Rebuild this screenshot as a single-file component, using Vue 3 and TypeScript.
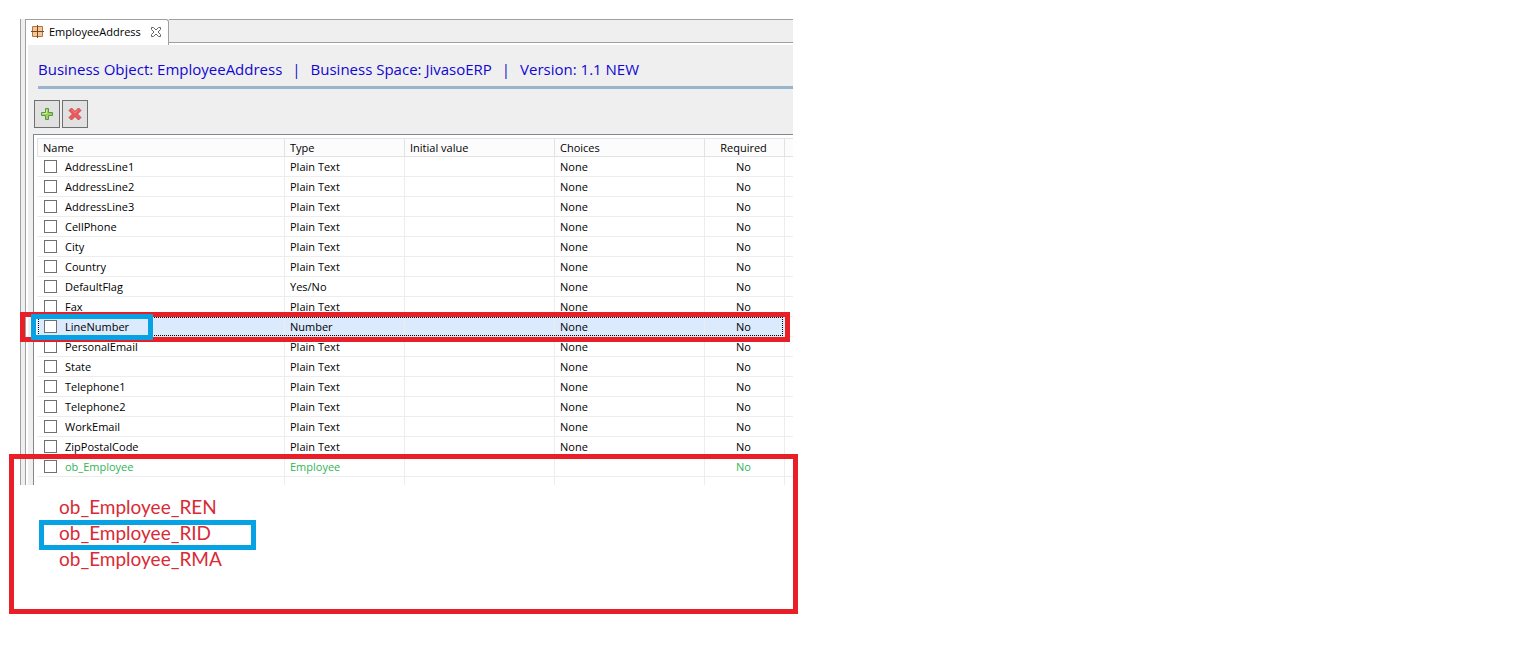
<script setup lang="ts">
interface Field {
  name: string
  type: string
  choices: string
  required: string
  state?: 'selected' | 'reference'
}

const plain = (name: string): Field => ({ name, type: 'Plain Text', choices: 'None', required: 'No' })

const summary: string[] = [
  'Business Object: EmployeeAddress',
  'Business Space: JivasoERP',
  'Version: 1.1 NEW',
]

const fields: Field[] = [
  plain('AddressLine1'),
  plain('AddressLine2'),
  plain('AddressLine3'),
  plain('CellPhone'),
  plain('City'),
  plain('Country'),
  { ...plain('DefaultFlag'), type: 'Yes/No' },
  plain('Fax'),
  { ...plain('LineNumber'), type: 'Number', state: 'selected' },
  plain('PersonalEmail'),
  plain('State'),
  plain('Telephone1'),
  plain('Telephone2'),
  plain('WorkEmail'),
  plain('ZipPostalCode'),
  { name: 'ob_Employee', type: 'Employee', choices: '', required: 'No', state: 'reference' },
]

const derived = [
  { text: 'ob_Employee_REN', marked: false },
  { text: 'ob_Employee_RID', marked: true },
  { text: 'ob_Employee_RMA', marked: false },
]
</script>

<template>
  <main class="page">
    <section class="window">
      <div class="sash"></div>
      <div class="editor">
        <div class="tabs">
          <div class="tab">
            <svg class="tab-icon" width="13" height="13" viewBox="0 0 13 13" aria-hidden="true">
              <rect x="1" y="1" width="11" height="11" rx="1" fill="#b5743c" />
              <rect x="2" y="2" width="4" height="4" fill="#f0c899" />
              <rect x="7" y="2" width="4" height="4" fill="#f0c899" />
              <rect x="2" y="7" width="4" height="4" fill="#f0c899" />
              <rect x="7" y="7" width="4" height="4" fill="#f0c899" />
              <path d="M6.5 0v13M0 6.5h13" stroke="#7d4520" />
            </svg>
            <span>EmployeeAddress</span>
            <button class="close" type="button" aria-label="Close tab">
              <svg width="12" height="12" viewBox="0 0 12 12" aria-hidden="true">
                <path
                  d="M1.5 1.5h2L6 4l2.5-2.500h2v2L8 6l2.500 2.500v2h-2L6 8l-2.500 2.500h-2v-2L4 6 1.500 3.500z"
                  fill="#fff" stroke="#666" stroke-width="1"
                />
              </svg>
            </button>
          </div>
          <div class="tab-rest"></div>
        </div>
        <div class="body">
          <h1 class="summary">
            <template v-for="(part, i) in summary" :key="part">
              <span v-if="i > 0">|</span>
              <span>{{ part }}</span>
            </template>
          </h1>
          <div class="toolbar">
            <button type="button" aria-label="Add">
              <svg width="14" height="14" viewBox="0 0 14 14" aria-hidden="true">
                <path d="M5.500 1.500h3v4h4v3h-4v4h-3v-4h-4v-3h4z" fill="#a0cf5c" stroke="#5b9648" stroke-linejoin="round" />
                <path d="M6.500 2.500v4h-4" fill="none" stroke="#cfe8a0" />
              </svg>
            </button>
            <button type="button" aria-label="Delete">
              <svg width="14" height="14" viewBox="0 0 14 14" aria-hidden="true">
                <path d="M3.500 1 7 4.500 10.500 1 13 3.500 9.500 7l3.500 3.500-2.500 2.500L7 9.500 3.500 13 1 10.500 4.500 7 1 3.500z" fill="#ea5a5c" stroke="#cc4c52" stroke-linejoin="round" />
                <path d="M3.500 2.500 7 6l3.500-3.500" fill="none" stroke="#f0807e" />
              </svg>
            </button>
          </div>
          <div class="grid">
            <table>
              <colgroup>
                <col class="c-name" /><col class="c-type" /><col class="c-wide" />
                <col class="c-wide" /><col class="c-req" /><col class="c-end" />
              </colgroup>
              <thead>
                <tr>
                  <th>Name</th><th>Type</th><th>Initial value</th><th>Choices</th>
                  <th class="center">Required</th><th></th>
                </tr>
              </thead>
              <tbody>
                <tr v-for="f in fields" :key="f.name" :class="f.state">
                  <td>
                    <label class="check"><input type="checkbox" /><span>{{ f.name }}</span></label>
                    <template v-if="f.state === 'selected'">
                      <span class="focus"></span>
                      <span class="mark-row"></span>
                      <span class="mark-name"></span>
                    </template>
                  </td>
                  <td>{{ f.type }}</td>
                  <td></td>
                  <td>{{ f.choices }}</td>
                  <td class="center">{{ f.required }}</td>
                  <td></td>
                </tr>
                <tr class="cut"><td></td><td></td><td></td><td></td><td></td><td></td></tr>
              </tbody>
            </table>
          </div>
        </div>
      </div>
    </section>
    <section class="notes">
      <ul>
        <li v-for="d in derived" :key="d.text" :class="{ marked: d.marked }">{{ d.text }}</li>
      </ul>
    </section>
  </main>
</template>

<style>
body {
  margin: 0;
  background: #fff;
}
</style>

<style scoped>
* {
  box-sizing: border-box;
}
.page {
  max-width: 798px;
  padding-top: 19px;
  font: 11px/16px "Open Sans", "Noto Sans", sans-serif;
  color: #000;
}
.window {
  display: flex;
  margin: 0 5px 0 20px;
}
.sash {
  width: 5px;
  border-left: 1px solid #a0a0a0;
  background: #efefef;
}
.editor {
  flex: 1;
  min-width: 0;
  border-left: 1px solid #a0a0a0;
}
.tabs {
  display: flex;
  height: 26px;
}
.tab {
  display: flex;
  align-items: center;
  gap: 5px;
  padding: 0 6px 2px 5px;
  border-top: 1px solid #a0a0a0;
  border-right: 1px solid #a0a0a0;
  border-top-right-radius: 3px;
  white-space: nowrap;
}
.tab-icon {
  flex: none;
}
.close {
  display: flex;
  padding: 0;
  margin-left: 4px;
  border: 0;
  background: none;
}
.tab-rest {
  flex: 1;
  height: 24px;
  border-top: 1px solid #a0a0a0;
  border-bottom: 1px solid #a0a0a0;
  background: #efefef;
}
.body {
  margin-left: 2px;
  padding-left: 5px;
  background: #efefef;
}
.summary {
  display: flex;
  gap: 10px;
  margin: 0 0 0 5px;
  padding: 12px 0 5px;
  border-bottom: 3px solid #9ab4cf;
  font-size: 15px;
  font-weight: 400;
  line-height: 24px;
  color: #1206d2;
  white-space: nowrap;
}
.toolbar {
  display: flex;
  gap: 2px;
  padding: 11px 0 6px 1px;
}
.toolbar button {
  display: flex;
  align-items: center;
  justify-content: center;
  width: 26px;
  height: 28px;
  padding: 0;
  border: 1px solid #707070;
  background: #e1e1e1;
}
.grid {
  padding: 3px 0 0 3px;
  border-top: 1px solid #828790;
  border-left: 1px solid #828790;
  background: #fff;
}
table {
  width: 100%;
  table-layout: fixed;
  border-collapse: separate;
  border-spacing: 0;
}
.c-name { width: 248px; }
.c-type { width: 120px; }
.c-wide { width: 150px; }
.c-req { width: 80px; }
th,
td {
  padding: 0 0 0 5px;
  text-align: left;
  font-weight: 400;
  white-space: nowrap;
}
th {
  height: 19px;
  border: solid #e2e2e2;
  border-width: 1px 1px 1px 0;
  background: #fcfcfc;
  line-height: 17px;
}
th:first-child {
  border-left-width: 1px;
}
td {
  height: 20px;
  border: solid #ededed;
  border-width: 0 1px 1px 0;
  line-height: 19px;
}
th:last-child,
td:last-child {
  padding: 0;
  border-right: 0;
}
.center {
  padding: 0 2px 0 0;
  text-align: center;
}
td:first-child {
  padding-left: 7px;
}
.check {
  display: flex;
  align-items: center;
  gap: 8px;
}
.check input {
  appearance: none;
  width: 13px;
  height: 13px;
  margin: 0;
  border: 1px solid #707070;
  background: #fff;
}
.selected {
  position: relative;
}
.selected td:not(:last-child) {
  background: #dbeafd;
}
.focus,
.mark-row,
.mark-name {
  position: absolute;
  pointer-events: none;
}
.focus {
  inset: 0 10px 1px 1px;
  border: 1px dotted #000;
}
.mark-row {
  inset: -5px 3px -5px -17px;
  border: 5px solid #e81f27;
}
.mark-name {
  top: -3px;
  left: -6px;
  width: 122px;
  height: 26px;
  border: 5px solid #06a2e4;
}
.reference {
  color: #2fb457;
}
.cut td {
  height: 8px;
  border-bottom: 0;
}
.notes {
  position: relative;
  margin: -31px 0 0 9px;
  padding: 35px 25px 37px;
  border: 5px solid #e81f27;
}
.notes ul {
  display: flex;
  flex-direction: column;
  align-items: flex-start;
  margin: 0;
  padding: 0;
  list-style: none;
  font: 19px/26px Lato, "Open Sans", sans-serif;
  color: #d92b35;
}
.notes li {
  padding-left: 20px;
}
.notes .marked {
  width: 217px;
  margin-bottom: -4px;
  padding: 0 0 4px 15px;
  border: 5px solid #06a2e4;
  line-height: 16px;
}
</style>
